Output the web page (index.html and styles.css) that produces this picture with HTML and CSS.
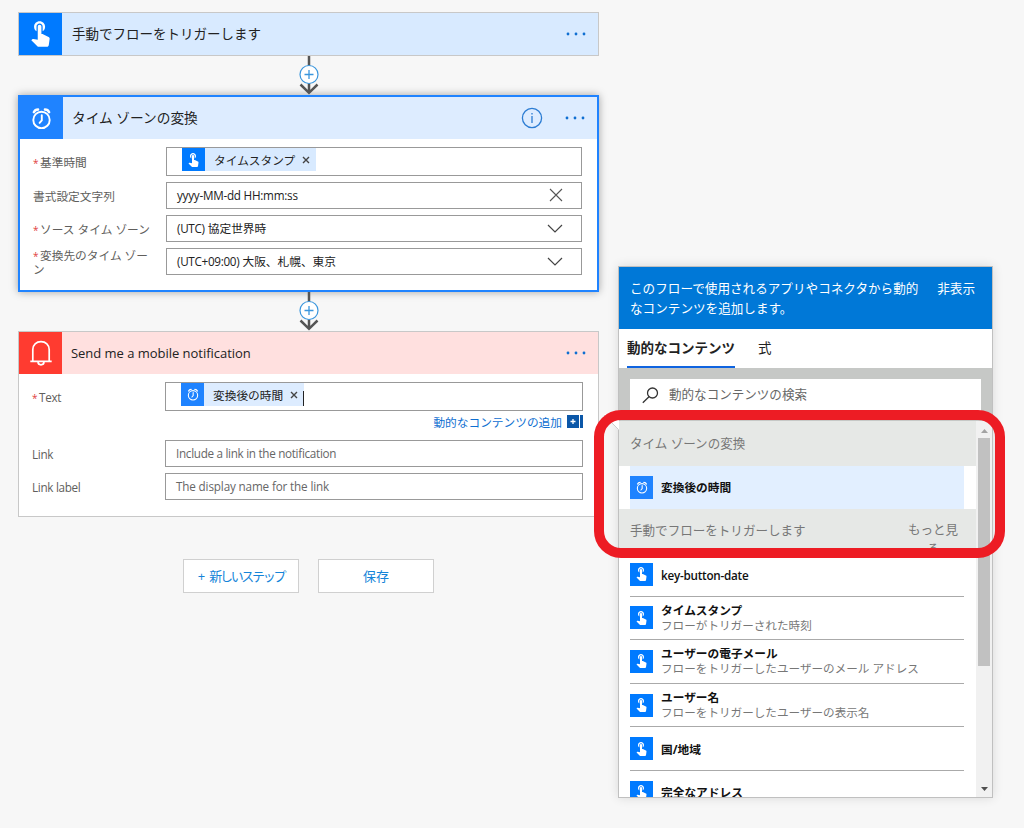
FILE: index.html
```html
<!DOCTYPE html>
<html lang="ja">
<head>
    <meta charset="UTF-8">
    <meta name="viewport" content="width=device-width, initial-scale=1.0">
    <title>フローの編集</title>
    <link rel="stylesheet" href="styles.css">
</head>
<body>
    <!-- Shared icons -->
    <svg class="icon-defs" width="0" height="0">
        <symbol id="icon-touch" viewBox="4.5 3 15.5 21">
            <path fill="#fff" d="M9 11.24V7.5C9 6.12 10.12 5 11.5 5S14 6.12 14 7.5v3.74c1.21-.81 2-2.18 2-3.74C16 5.01 13.99 3 11.5 3S7 5.01 7 7.5c0 1.56.79 2.93 2 3.74zm9.84 4.63l-4.54-2.26c-.17-.07-.35-.11-.54-.11H13v-6c0-.83-.67-1.5-1.5-1.5S10 6.67 10 7.5v10.74l-3.43-.72c-.08-.01-.15-.03-.24-.03-.31 0-.59.13-.79.33l-.79.8 4.94 4.94c.27.27.65.44 1.06.44h6.79c.75 0 1.33-.55 1.44-1.28l.75-5.27c.01-.07.02-.14.02-.2 0-.62-.38-1.16-.91-1.38z"/>
        </symbol>
        <symbol id="icon-alarm" viewBox="0 0 22 24">
            <g fill="none" stroke="#fff" stroke-width="2" stroke-linecap="round">
                <circle cx="11" cy="13.5" r="8.6"/>
                <path d="M11.3 8.500v5.500l-2.300 2.600"/>
                <path d="M3 5.4C3.8 3.6 5.4 2.6 7.4 2.6M19 5.4c-.8-1.8-2.4-2.8-4.4-2.8" stroke-width="2.6"/>
            </g>
        </symbol>
        <symbol id="icon-bell" viewBox="0 0 22 26">
            <g fill="none" stroke="#fff" stroke-width="1.7">
                <path d="M2.800 21V9.500C2.800 4.800 6.300 1.600 11 1.600s8.200 3.200 8.200 7.900V21"/>
                <path d="M.3 21.300h21.400M8 21.800c0 1.800 1.300 3 3 3s3-1.200 3-3"/>
            </g>
        </symbol>
        <symbol id="icon-arrow" viewBox="0 0 20 39">
            <path d="M10 0v37M1.500 28.500l8.500 8.300 8.500-8.300" fill="none" stroke="#555" stroke-width="2.500"/>
            <circle cx="10" cy="18.500" r="9" fill="#fff" stroke="#3a96dd" stroke-width="1.200"/>
            <path d="M5.500 18.500h9M10 14v9" fill="none" stroke="#3a96dd" stroke-width="1.300"/>
        </symbol>
        <symbol id="icon-dots" viewBox="0 0 20 4">
            <g fill="#0f6fd1"><circle cx="2" cy="2" r="1.4"/><circle cx="10" cy="2" r="1.4"/><circle cx="18" cy="2" r="1.4"/></g>
        </symbol>
        <symbol id="icon-chevron" viewBox="0 0 16 9">
            <path d="M1 1l7 7 7-7" fill="none" stroke="#444" stroke-width="1.2"/>
        </symbol>
    </svg>

    <!-- Flow designer -->
    <div class="flow">
        <div class="card">
            <div class="card-header trigger">
                <div class="card-icon"><svg class="touch"><use href="#icon-touch"/></svg></div>
                <div class="card-title">手動でフローをトリガーします</div>
                <svg class="dots"><use href="#icon-dots"/></svg>
            </div>
        </div>

        <svg class="connector"><use href="#icon-arrow"/></svg>

        <div class="card selected">
            <div class="card-header timezone">
                <div class="card-icon"><svg class="alarm"><use href="#icon-alarm"/></svg></div>
                <div class="card-title">タイム ゾーンの変換</div>
                <svg class="info" viewBox="0 0 22 22">
                    <circle cx="11" cy="11" r="9.6" fill="none" stroke="#2b7cd3" stroke-width="1.3"/>
                    <path d="M11 9v7M11 6v1.5" stroke="#2b7cd3" stroke-width="1.3"/>
                </svg>
                <svg class="dots"><use href="#icon-dots"/></svg>
            </div>
            <div class="card-body">
                <div class="row">
                    <div class="label"><span class="req">*</span>基準時間</div>
                    <div class="input tall">
                        <div class="token">
                            <span class="badge touch-badge"><svg><use href="#icon-touch"/></svg></span>
                            <span class="token-text">タイムスタンプ</span>
                            <svg class="remove" viewBox="0 0 8 8"><path d="M1 1l6 6M7 1L1 7"/></svg>
                        </div>
                    </div>
                </div>
                <div class="row">
                    <div class="label">書式設定文字列</div>
                    <div class="input">
                        <span class="format">yyyy-MM-dd HH:mm:ss</span>
                        <svg class="clear" viewBox="0 0 14 14"><path d="M1 1l12 12M13 1L1 13" stroke="#555" stroke-width="1.1"/></svg>
                    </div>
                </div>
                <div class="row">
                    <div class="label"><span class="req">*</span>ソース タイム ゾーン</div>
                    <div class="input">
                        <span><span class="utc">(UTC)</span> 協定世界時</span>
                        <svg class="chevron"><use href="#icon-chevron"/></svg>
                    </div>
                </div>
                <div class="row">
                    <div class="label"><span class="req">*</span>変換先のタイム ゾーン</div>
                    <div class="input">
                        <span><span class="utc">(UTC+09:00)</span> 大阪、札幌、東京</span>
                        <svg class="chevron"><use href="#icon-chevron"/></svg>
                    </div>
                </div>
            </div>
        </div>

        <svg class="connector"><use href="#icon-arrow"/></svg>

        <div class="card">
            <div class="card-header notify">
                <div class="card-icon"><svg class="bell"><use href="#icon-bell"/></svg></div>
                <div class="card-title latin-title">Send me a mobile notification</div>
                <svg class="dots"><use href="#icon-dots"/></svg>
            </div>
            <div class="card-body">
                <div class="row">
                    <div class="label latin-label"><span class="req">*</span>Text</div>
                    <div class="input tall">
                        <div class="token alarm-token">
                            <span class="badge alarm-badge"><svg><use href="#icon-alarm"/></svg></span>
                            <span class="token-text">変換後の時間</span>
                            <svg class="remove" viewBox="0 0 8 8"><path d="M1 1l6 6M7 1L1 7"/></svg>
                            <span class="caret"></span>
                        </div>
                    </div>
                </div>
                <div class="add-content">
                    <span>動的なコンテンツの追加</span>
                    <svg viewBox="0 0 16 13">
                        <path d="M0 0h12v13H0zM13 0h3v13h-3z" fill="#0b57a8"/>
                        <path d="M3.5 6.5h5M6 4v5" stroke="#fff" stroke-width="1.3"/>
                    </svg>
                </div>
                <div class="row">
                    <div class="label latin-label">Link</div>
                    <div class="input placeholder link-hint">Include a link in the notification</div>
                </div>
                <div class="row">
                    <div class="label latin-label">Link label</div>
                    <div class="input placeholder">The display name for the link</div>
                </div>
            </div>
        </div>

        <div class="buttons">
            <div class="button"><span class="plus">+</span><span class="narrow">新しいステップ</span></div>
            <div class="button">保存</div>
        </div>
    </div>

    <!-- Dynamic content panel -->
    <div class="panel">
        <svg class="callout" viewBox="0 0 15 16"><path d="M15 0H0v1l15 15z" fill="#fff"/><path d="M0 1l14.500 14.500" stroke="#ccc"/></svg>
        <div class="panel-header">
            <div class="panel-message">このフローで使用されるアプリやコネクタから動的なコンテンツを追加します。</div>
            <div class="panel-hide">非表示</div>
        </div>
        <div class="tabs">
            <div class="tab active">動的なコンテンツ</div>
            <div class="tab">式</div>
        </div>
        <div class="search-area">
            <div class="search">
                <svg viewBox="0 0 17 17"><g fill="none" stroke="#333" stroke-width="1.3"><circle cx="10.500" cy="6" r="5"/><path d="M7 9.700L.8 15.800"/></g></svg>
                <span>動的なコンテンツの検索</span>
            </div>
        </div>
        <div class="list-area">
            <div class="list">
                <div class="section first">タイム ゾーンの変換</div>
                <div class="item highlighted">
                    <span class="badge alarm-badge"><svg><use href="#icon-alarm"/></svg></span>
                    <div class="item-name">変換後の時間</div>
                </div>
                <div class="section">
                    <span>手動でフローをトリガーします</span>
                    <span class="more">もっと見る</span>
                </div>
                <div class="item">
                    <span class="badge touch-badge"><svg><use href="#icon-touch"/></svg></span>
                    <div class="item-name key">key-button-date</div>
                </div>
                <div class="item">
                    <span class="badge touch-badge"><svg><use href="#icon-touch"/></svg></span>
                    <div>
                        <div class="item-name">タイムスタンプ</div>
                        <div class="item-desc">フローがトリガーされた時刻</div>
                    </div>
                </div>
                <div class="item">
                    <span class="badge touch-badge"><svg><use href="#icon-touch"/></svg></span>
                    <div>
                        <div class="item-name">ユーザーの電子メール</div>
                        <div class="item-desc">フローをトリガーしたユーザーのメール アドレス</div>
                    </div>
                </div>
                <div class="item">
                    <span class="badge touch-badge"><svg><use href="#icon-touch"/></svg></span>
                    <div>
                        <div class="item-name">ユーザー名</div>
                        <div class="item-desc">フローをトリガーしたユーザーの表示名</div>
                    </div>
                </div>
                <div class="item">
                    <span class="badge touch-badge"><svg><use href="#icon-touch"/></svg></span>
                    <div class="item-name">国/地域</div>
                </div>
                <div class="item">
                    <span class="badge touch-badge"><svg><use href="#icon-touch"/></svg></span>
                    <div class="item-name">完全なアドレス</div>
                </div>
            </div>
            <div class="scrollbar">
                <svg viewBox="0 0 7 4"><path d="M0 4l3.500-4L7 4z" fill="#a3a3a3"/></svg>
                <div class="thumb"></div>
                <svg viewBox="0 0 7 4"><path d="M0 0l3.500 4L7 0z" fill="#505050"/></svg>
            </div>
        </div>
        <div class="marker"></div>
    </div>
</body>
</html>
```
FILE: styles.css
```css
* {
    box-sizing: border-box;
}

body {
    display: flex;
    align-items: flex-start;
    width: 1024px;
    height: 828px;
    margin: 0;
    padding: 12px 0 0 18px;
    overflow: hidden;
    background-color: #f7f7f7;
    color: #222;
    font-family: "Open Sans", "Noto Sans CJK JP", sans-serif;
    font-size: 11.7px;
    line-height: 14px;
}

svg {
    display: block;
    flex: none;
}

.icon-defs {
    position: absolute;
}

/* Flow column */
.flow {
    width: 581px;
}

.card {
    border: 1px solid #c8c8c8;
    background-color: white;
}

.card.selected {
    border: 2px solid #1f83ff;
    box-shadow: 0 0 8px rgba(0, 0, 0, 0.35);
}

.card-header {
    display: flex;
    align-items: center;
    height: 42px;
    padding-right: 12px;
}

.trigger { background-color: #d8eaff; }
.timezone { background-color: #ddecff; }
.notify { background-color: #ffe0df; }

.card-icon {
    display: flex;
    align-items: center;
    justify-content: center;
    width: 43px;
    height: 42px;
}

.trigger .card-icon { background-color: #007aff; }
.timezone .card-icon { background-color: #1f83ff; }
.notify .card-icon { background-color: #ff3b30; }

.touch { width: 19px; height: 26px; }
.alarm { width: 21px; height: 23px; }
.bell { width: 22px; height: 26px; }

.card-title {
    flex: 1;
    padding-left: 10px;
    font-size: 13.5px;
    line-height: 20px;
}

.timezone .card-title {
    padding-left: 9px;
    font-size: 13.7px;
}

.card-title.latin-title {
    padding-left: 9px;
    font-size: 13px;
    letter-spacing: -0.03px;
}

.dots {
    width: 20px;
    height: 4px;
}

.info {
    width: 22px;
    height: 22px;
    margin-right: 22px;
}

.connector {
    width: 20px;
    height: 39px;
    margin-left: 280.5px;
}

/* Card fields */
.card-body {
    display: flex;
    flex-direction: column;
    gap: 6px;
    padding: 8px 15px 16px 13px;
}

.card.selected .card-body {
    height: 151px;
}

.row {
    display: flex;
    align-items: center;
    height: 27px;
}

.row:first-child {
    height: 29px;
}

.label {
    width: 133px;
    padding-right: 12px;
    color: #605e5c;
}

.latin-label {
    letter-spacing: -0.3px;
}

.req {
    display: inline-block;
    width: 7px;
    color: #e04040;
    font-size: 10px;
    line-height: 10px;
}

.input {
    display: flex;
    align-items: center;
    justify-content: space-between;
    flex: 1;
    height: 27px;
    padding: 0 18px 2px 10px;
    border: 1px solid #999;
    background-color: white;
}

.input.tall {
    align-items: flex-start;
    height: 29px;
    padding-left: 15px;
}

.format {
    letter-spacing: -0.25px;
}

.utc {
    letter-spacing: -0.3px;
}

.placeholder {
    color: #666;
    letter-spacing: -0.15px;
}

.link-hint {
    letter-spacing: -0.3px;
}

.clear { width: 14px; height: 14px; }
.chevron { width: 16px; height: 9px; position: relative; top: 1px; }

.token {
    display: flex;
    align-items: center;
    height: 23px;
    padding-right: 6px;
    background-color: #d8eaff;
}

.alarm-token {
    padding-right: 0;
    background-color: #ddecff;
}

.token-text {
    padding: 0 7px 0 9px;
}

.remove {
    width: 8px;
    height: 8px;
    stroke: #444;
    stroke-width: 1.4;
}

.caret {
    width: 1px;
    height: 15px;
    margin: 8px 0 0 5px;
    background-color: #222;
}

.badge {
    display: flex;
    align-items: center;
    justify-content: center;
    flex: none;
    width: 23px;
    height: 23px;
}

.touch-badge { background-color: #007aff; }
.alarm-badge { background-color: #1f83ff; }

.touch-badge svg { width: 11px; height: 14px; }
.alarm-badge svg { width: 12px; height: 13px; }

.add-content {
    display: flex;
    align-items: center;
    justify-content: flex-end;
    gap: 5px;
    height: 17px;
    padding-bottom: 8px;
    color: #0f6fd1;
}

.add-content svg {
    width: 16px;
    height: 13px;
}

/* Buttons under the flow */
.buttons {
    display: flex;
    justify-content: center;
    gap: 19px;
    margin: 42px 0 0 0;
}

.button {
    display: flex;
    align-items: center;
    justify-content: center;
    width: 116px;
    height: 34px;
    border: 1px solid #d0d0d0;
    background-color: white;
    color: #1484d8;
    font-size: 13px;
}

.plus {
    margin-right: 4px;
}

.narrow {
    letter-spacing: -2.3px;
}

/* Dynamic content panel */
.panel {
    position: relative;
    width: 375px;
    height: 532px;
    margin: 254px 0 0 19px;
    border: 1px solid #c0c0c0;
    background-color: white;
    box-shadow: 0 0 10px rgba(0, 0, 0, 0.12);
}

.callout {
    position: absolute;
    left: -15px;
    top: 147px;
    width: 15px;
    height: 16px;
}

.panel-header {
    display: flex;
    height: 62px;
    padding: 12px 17px 0 11px;
    justify-content: space-between;
    background-color: #0078d7;
    color: white;
    font-size: 12.6px;
    line-height: 20px;
}

.panel-message {
    width: 292px;
}

.tabs {
    display: flex;
    gap: 23px;
    height: 39px;
    padding-left: 8px;
    font-size: 13.5px;
    line-height: 38px;
}

.tab.active {
    border-bottom: 2px solid #0f64e0;
    font-weight: bold;
}

.search-area {
    height: 53px;
    padding: 11px 11px 8px;
    background-color: #c6c8c6;
}

.search {
    display: flex;
    align-items: center;
    gap: 10px;
    height: 34px;
    padding: 0 0 2px 12px;
    background-color: white;
    color: #666;
    font-size: 12.55px;
}

.search svg {
    width: 17px;
    height: 17px;
}

.list-area {
    display: flex;
    height: 376px;
}

.list {
    width: 357px;
    overflow: hidden;
}

.section {
    display: flex;
    justify-content: space-between;
    height: 44px;
    padding: 12px 16px 0 11px;
    background-color: #e6e8e6;
    color: #777;
    font-size: 12.55px;
    line-height: 20px;
    overflow: hidden;
}

.section.first {
    height: 45px;
    padding-top: 13px;
}

.more {
    width: 54px;
    margin-top: -1px;
    line-height: 19px;
    text-align: center;
}

.item {
    display: flex;
    align-items: center;
    gap: 8px;
    height: 43.6px;
    margin: 0 12px 0 11px;
    border-bottom: 1px solid #aaa;
    line-height: 16px;
}

.item.highlighted {
    height: 43px;
    padding-bottom: 1px;
    border-bottom: none;
    background-color: #e2efff;
}

.item-name {
    color: #111;
    font-weight: bold;
}

.item-name.key {
    padding-top: 1px;
    font-weight: 600;
    letter-spacing: -0.25px;
}

.item-desc {
    color: #777;
    font-size: 11.6px;
}

.scrollbar {
    display: flex;
    flex-direction: column;
    align-items: center;
    width: 16px;
    height: 376px;
    padding: 8px 0 6px;
    background-color: #f1f1f1;
}

.scrollbar svg {
    width: 7px;
    height: 4px;
}

.thumb {
    width: 12px;
    height: 228px;
    margin: 5px 0 auto;
    background-color: #c1c1c1;
}

/* Red frame around the converted time entry */
.marker {
    position: absolute;
    left: -25px;
    top: 143px;
    width: 411px;
    height: 148px;
    border: 10px solid #ed1c24;
    border-radius: 27px;
}
```
